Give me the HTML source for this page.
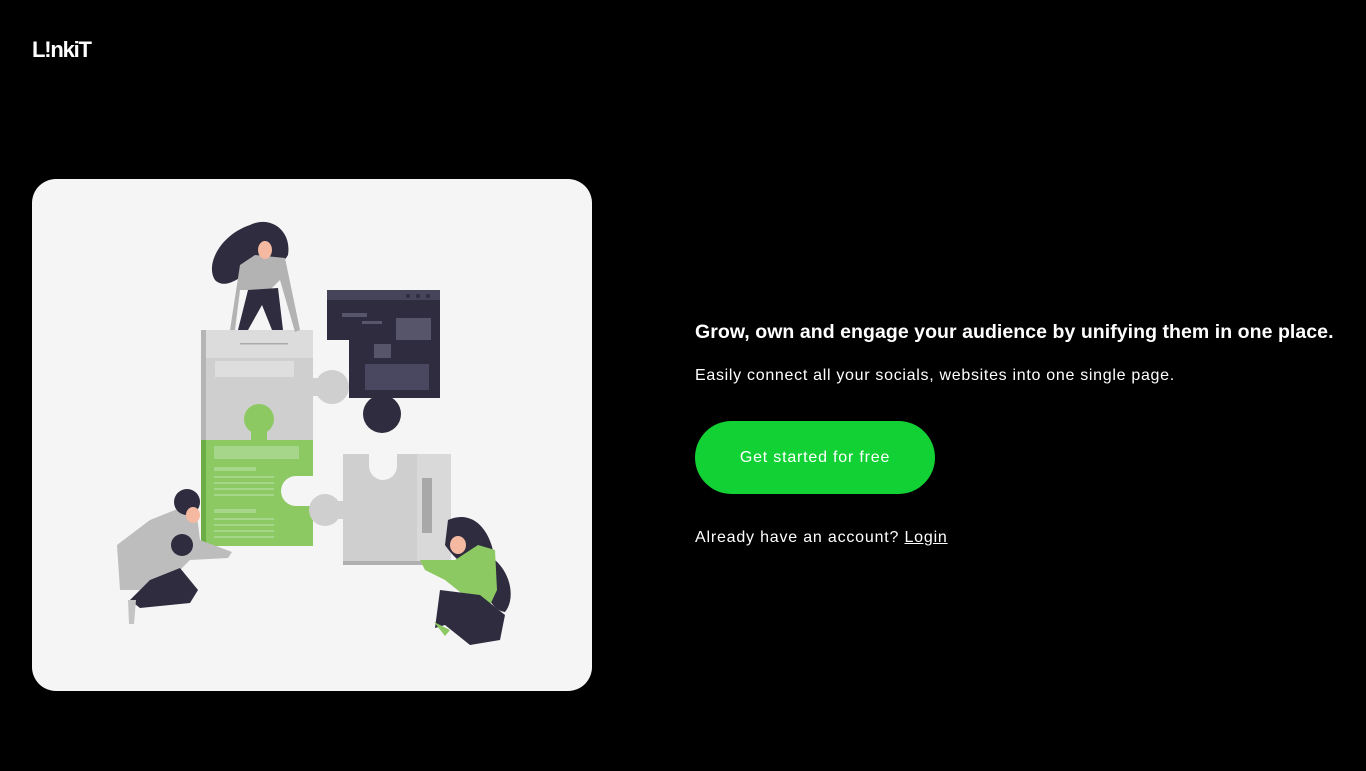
<!DOCTYPE html>
<html><head><style>
body{margin:0;background:#000;width:1366px;height:771px;overflow:hidden;font-family:"Liberation Sans",sans-serif;color:#fff;position:relative}
.logo{position:absolute;left:32px;top:37px;font-size:22px;letter-spacing:-1.2px;font-weight:bold}
.card{position:absolute;left:32px;top:179px;width:560px;height:512px;background:#f5f5f5;border-radius:24px;overflow:hidden}
h1{position:absolute;left:695px;top:321px;margin:0;font-size:19.5px;font-weight:bold;letter-spacing:0.05px;white-space:nowrap}
.sub{position:absolute;left:695px;top:367px;font-size:16px;letter-spacing:0.7px;white-space:nowrap}
.btn{position:absolute;left:695px;top:421px;width:240px;height:73px;border-radius:37px;background:#12d135;color:#fff;font-size:16px;letter-spacing:0.8px;display:flex;align-items:center;justify-content:center}
.acc{position:absolute;left:695px;top:529px;font-size:16px;letter-spacing:0.8px}
.acc u{color:#fff}
</style></head><body>
<div class="logo">L!nkiT</div>
<div class="card">
<svg width="560" height="512" viewBox="32 179 560 512">
<!-- dark piece -->
<rect x="327" y="290" width="113" height="108" fill="#2e2c3e"/>
<rect x="327" y="340" width="22" height="60" fill="#f5f5f5"/>
<rect x="372" y="396" width="20" height="10" fill="#2e2c3e"/>
<circle cx="382" cy="414" r="19" fill="#2e2c3e"/>
<rect x="327" y="290" width="113" height="10" fill="#46445a"/>
<circle cx="408" cy="296" r="2" fill="#2e2c3e"/><circle cx="418" cy="296" r="2" fill="#2e2c3e"/><circle cx="428" cy="296" r="2" fill="#2e2c3e"/>
<rect x="396" y="318" width="35" height="22" fill="#57556a"/><rect x="374" y="344" width="17" height="14" fill="#57556a"/>
<rect x="342" y="313" width="25" height="4" fill="#57556a"/><rect x="362" y="321" width="20" height="3" fill="#57556a"/>
<rect x="365" y="364" width="64" height="26" fill="#4a4860"/>
<!-- gray upper -->
<rect x="201" y="330" width="112" height="110" fill="#cfcfcf"/>
<rect x="310" y="378" width="14" height="18" fill="#cfcfcf"/>
<circle cx="332" cy="387" r="17" fill="#cfcfcf"/>
<rect x="201" y="330" width="112" height="28" fill="#dcdcdc"/>
<rect x="240" y="343" width="48" height="1.5" fill="#aaa"/>
<rect x="215" y="361" width="79" height="16" fill="#dedede"/>
<!-- green -->
<rect x="201" y="440" width="112" height="106" fill="#8dc963"/>
<rect x="251" y="425" width="16" height="16" fill="#8dc963"/>
<circle cx="259" cy="419" r="15" fill="#8dc963"/>
<circle cx="296" cy="491" r="15" fill="#f5f5f5"/>
<rect x="296" y="476" width="17" height="30" fill="#f5f5f5"/>
<rect x="201" y="330" width="5" height="110" fill="#b5b5b5"/>
<rect x="201" y="440" width="5" height="106" fill="#6cae45"/>
<rect x="214" y="446" width="85" height="13" fill="#a6d68a"/>
<g fill="#a6d68a"><rect x="214" y="467" width="42" height="4"/><rect x="214" y="476" width="60" height="2"/><rect x="214" y="482" width="60" height="2"/><rect x="214" y="488" width="60" height="2"/><rect x="214" y="494" width="60" height="2"/><rect x="214" y="509" width="42" height="4"/><rect x="214" y="518" width="60" height="2"/><rect x="214" y="524" width="60" height="2"/><rect x="214" y="530" width="60" height="2"/><rect x="214" y="536" width="60" height="2"/></g>
<!-- light gray piece -->
<rect x="343" y="454" width="108" height="111" fill="#cfcfcf"/>
<rect x="417" y="454" width="34" height="111" fill="#d9d9d9"/>
<circle cx="383" cy="466" r="14" fill="#f5f5f5"/>
<rect x="369" y="454" width="28" height="12" fill="#f5f5f5"/>
<rect x="330" y="501" width="15" height="18" fill="#cfcfcf"/>
<circle cx="325" cy="510" r="16" fill="#cfcfcf"/>
<rect x="422" y="478" width="10" height="55" fill="#a8a8a8"/>
<rect x="343" y="561" width="108" height="4" fill="#b0b0b0"/>
<!-- woman top -->
<path d="M250 225C270 215 292 230 288 255C280 270 260 265 250 270C240 278 225 290 215 280C205 265 220 235 250 225Z" fill="#2e2c3e"/>
<path d="M255 255L285 258L300 330L295 332L280 280L270 290L240 290L235 330H230L240 265Z" fill="#b3b3b3"/>
<path d="M248 290L278 288L283 330H272L262 305L248 330H238Z" fill="#2e2c3e"/>
<ellipse cx="265" cy="250" rx="7" ry="9" fill="#f5b8a0"/>
<!-- man left -->
<path d="M175 510L195 500L200 540L232 552L228 558L190 560L160 590L120 590L117 545L150 520Z" fill="#bdbdbd"/>
<path d="M150 580L180 568L198 590L190 603L140 608L130 600Z" fill="#2e2c3e"/>
<circle cx="187" cy="502" r="13" fill="#2e2c3e"/>
<ellipse cx="193" cy="515" rx="7" ry="8" fill="#f5b8a0"/>
<circle cx="182" cy="545" r="11" fill="#2e2c3e"/>
<path d="M128 600L136 600L134 624L129 624Z" fill="#c4c4c4"/>
<!-- woman right -->
<path d="M448 520C470 510 490 525 495 560C512 575 515 600 505 612C490 610 485 590 480 575C470 570 455 560 445 545Z" fill="#2e2c3e"/>
<path d="M420 560L455 560L478 545L495 550L497 590L490 605L470 600L445 580L425 570Z" fill="#8dc963"/>
<path d="M440 590L480 595L505 615L500 640L470 645L445 625L435 628Z" fill="#2e2c3e"/>
<ellipse cx="458" cy="545" rx="8" ry="9" fill="#f5b8a0"/>
<path d="M434 622L450 630L445 636Z" fill="#8dc963"/>
</svg>
</div>
<h1>Grow, own and engage your audience by unifying them in one place.</h1>
<div class="sub">Easily connect all your socials, websites into one single page.</div>
<div class="btn">Get started for free</div>
<div class="acc">Already have an account? <u>Login</u></div>
</body></html>
